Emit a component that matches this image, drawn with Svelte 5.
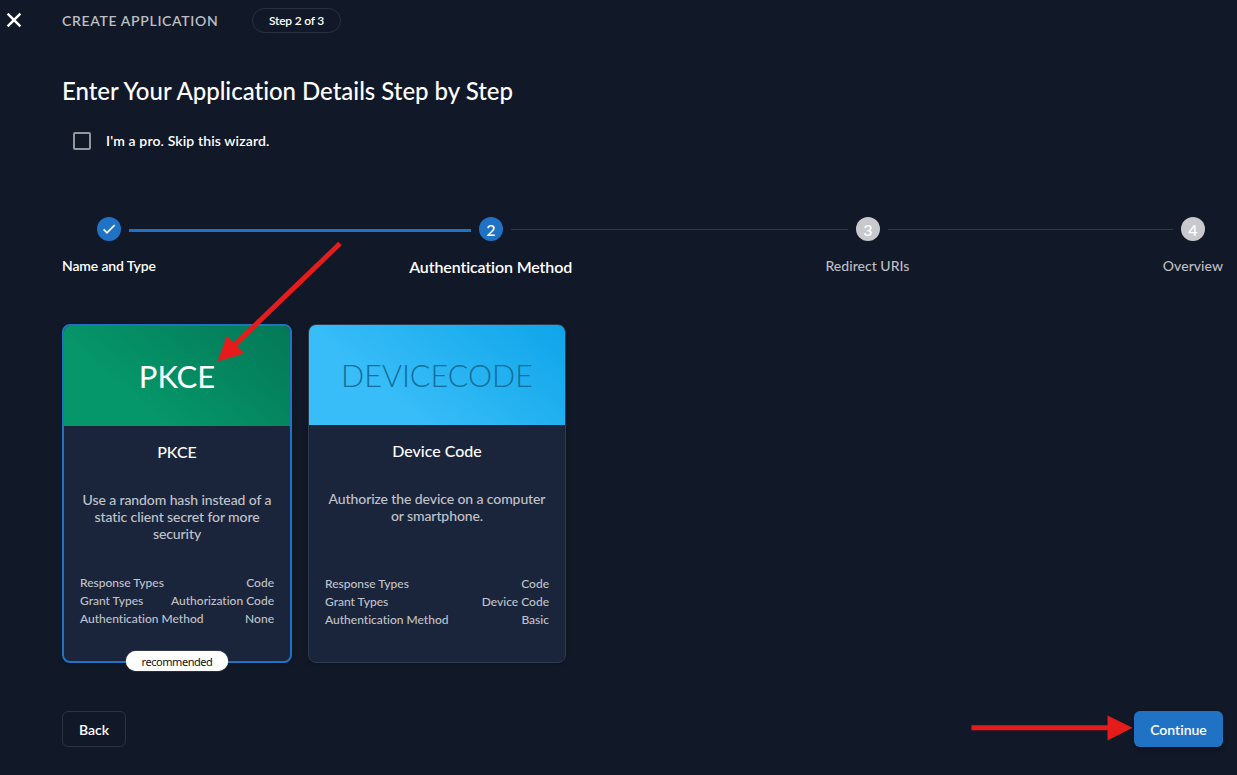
<script>
  const steps = [
    { label: 'Name and Type', state: 'done', line: 342 },
    { label: 'Authentication Method', state: 'current', line: 337 },
    { label: 'Redirect URIs', state: 'todo', line: 285 },
    { label: 'Overview', state: 'todo', line: 0 },
  ];

  const methods = [
    {
      key: 'PKCE',
      title: 'PKCE',
      theme: 'green',
      recommended: true,
      description: ['Use a random hash instead of a', 'static client secret for more', 'security'],
      rows: [
        ['Response Types', 'Code'],
        ['Grant Types', 'Authorization Code'],
        ['Authentication Method', 'None'],
      ],
    },
    {
      key: 'DEVICECODE',
      title: 'Device Code',
      theme: 'blue',
      recommended: false,
      description: ['Authorize the device on a computer', 'or smartphone.'],
      rows: [
        ['Response Types', 'Code'],
        ['Grant Types', 'Device Code'],
        ['Authentication Method', 'Basic'],
      ],
    },
  ];
</script>

<div class="page">
  <header>
    <button class="close" aria-label="Close">
      <svg width="16" height="16" viewBox="0 0 16 16"><path d="M1.6 1.600 14.400 14.400M14.400 1.600 1.600 14.400" /></svg>
    </button>
    <span class="crumb">CREATE APPLICATION</span>
    <span class="pill">Step 2 of 3</span>
  </header>

  <main>
    <h1>Enter Your Application Details Step by Step</h1>

    <div class="skip">
      <span class="box" role="checkbox" aria-checked="false" aria-label="Skip wizard" tabindex="0"></span>
      <span class="skip-text">I'm a pro. Skip this wizard.</span>
    </div>

    <div class="track">
      {#each steps as step, i}
        <span class="dot {step.state}">
          {#if step.state === 'done'}
            <svg width="16" height="16" viewBox="0 0 24 24"><path d="M9 16.17 4.83 12l-1.42 1.41L9 19 21 7l-1.41-1.41z" /></svg>
          {:else}
            {i + 1}
          {/if}
        </span>
        {#if step.line}
          <span class="line {step.state}" style="flex-grow: {step.line}"></span>
        {/if}
      {/each}
    </div>
    <div class="labels">
      {#each steps as step}
        <span class={step.state}>{step.label}</span>
      {/each}
    </div>

    <div class="cards">
      {#each methods as method}
        <section class="card {method.theme}" class:selected={method.recommended}>
          <div class="banner"><span>{method.key}</span></div>
          <h2>{method.title}</h2>
          <p>
            {#each method.description as text}<span>{text}</span>{/each}
          </p>
          <dl>
            {#each method.rows as [name, value]}
              <div><dt>{name}</dt><dd>{value}</dd></div>
            {/each}
          </dl>
          {#if method.recommended}
            <span class="badge">recommended</span>
          {/if}
        </section>
      {/each}
    </div>

    <footer>
      <button class="back">Back</button>
      <button class="continue">Continue</button>
    </footer>
  </main>

  <svg class="arrows" width="1237" height="775" viewBox="0 0 1237 775">
    <path class="shaft" d="M340 243.500 232 347.500" />
    <path class="head" d="M217.500 361.500 227 335.500 244 353.500z" />
    <path class="shaft" d="M971.500 727.800H1110" />
    <path class="head" d="M1132.500 727.800 1107.500 715.500V740.500z" />
  </svg>
</div>

<style>
  :global(body) { margin: 0; background: #111827; }
  .page {
    position: relative;
    box-sizing: border-box;
    width: 1237px;
    height: 775px;
    overflow: hidden;
    background: #111827;
    color: #fff;
    font-family: Lato, sans-serif;
    font-size: 14px;
    font-variant-ligatures: none;
    white-space: nowrap;
  }
  button { font: inherit; font-variant-ligatures: none; color: inherit; padding: 0; cursor: pointer; }
  header { display: flex; align-items: center; height: 41px; padding-left: 6px; }
  .close { display: flex; width: 16px; margin: -2px 40px 0 0; border: 0; background: none; }
  .close path { stroke: #fff; stroke-width: 2.5; fill: none; }
  .crumb { width: 190px; color: #bcbec2; font-size: 14px; font-weight: 600; letter-spacing: 0.65px; }
  .pill {
    box-sizing: border-box;
    width: 89px;
    height: 25px;
    border: 1px solid #293241;
    border-radius: 13px;
    font-size: 12px;
    font-weight: 600;
    line-height: 24px;
    text-align: center;
    letter-spacing: -0.2px;
  }
  main { padding: 0 14px 0 62px; }
  h1 { margin: 35px 0 0; font-size: 24px; font-weight: 500; line-height: 30px; letter-spacing: -0.02px; }
  .skip { display: flex; align-items: center; height: 24px; margin-top: 23px; padding-left: 11px; gap: 15px; font-weight: 600; }
  .skip-text { margin-top: -1px; letter-spacing: 0.13px; }
  .box { box-sizing: border-box; width: 18px; height: 18px; border: 2px solid #94979d; border-radius: 2px; }
  .track { display: flex; align-items: center; gap: 8px; height: 24px; margin-top: 64px; padding: 0 18px 0 35px; }
  .dot {
    display: flex;
    flex: none;
    align-items: center;
    justify-content: center;
    width: 24px;
    height: 24px;
    border-radius: 50%;
    background: #2073c4;
    font-size: 16px;
    font-weight: 500;
    line-height: 24px;
    padding-top: 2px;
    box-sizing: border-box;
  }
  .dot.done { padding-top: 0; }
  .dot.todo { background: #c7c9cc; }
  .dot svg { fill: #fff; stroke: #fff; stroke-width: 0.6; }
  .line { flex-basis: 0; height: 1px; background: #30384a; }
  .line.done { height: 3px; margin-top: 2px; background: #2073c4; }
  .labels { display: flex; justify-content: space-between; height: 20px; margin-top: 15px; font-weight: 600; line-height: 20px; }
  .labels .done { letter-spacing: -0.15px; }
  .labels .current { font-size: 16px; line-height: 22px; letter-spacing: -0.12px; }
  .labels .todo { color: #bcbec2; font-weight: 500; letter-spacing: 0.03px; }
  .cards { display: flex; gap: 16px; height: 339px; margin-top: 48px; }
  .card {
    position: relative;
    box-sizing: border-box;
    display: flex;
    flex-direction: column;
    width: 258px;
    border: 1px solid #2d3a50;
    border-radius: 8px;
    background: #1a253c;
    box-shadow: 0 1px 4px rgba(0, 0, 0, 0.25);
    text-align: center;
  }
  .card.selected { width: 230px; border: 2px solid #2073c4; }
  .banner {
    display: flex;
    align-items: center;
    justify-content: center;
    height: 100px;
    border-radius: 7px 7px 0 0;
    font-size: 31px;
  }
  .selected .banner { border-radius: 6px 6px 0 0; }
  .green .banner { background: linear-gradient(40deg, #059669 30%, #047857); }
  .blue .banner { background: linear-gradient(40deg, #38bdf8 30%, #0ea5e9); color: #126f9b; font-size: 30.500px; font-weight: 300; }
  h2 { margin: 15px 0 0; font-size: 16px; font-weight: 500; line-height: 22px; }
  p { display: flex; flex-direction: column; height: 51px; margin: 28px 0 0; color: #c0c3c9; line-height: 17px; font-weight: 500; letter-spacing: -0.1px; }
  dl { margin: 32px 16px 0; color: #c0c3c9; font-size: 12px; line-height: 18px; font-weight: 500; letter-spacing: 0; }
  .blue dl { margin-top: 34px; }
  dl div { display: flex; justify-content: space-between; }
  dd { margin: 0; }
  .badge {
    position: absolute;
    left: 62px;
    bottom: -10px;
    width: 102px;
    height: 20px;
    border-radius: 10px;
    background: #fff;
    box-shadow: 0 0 1px #fff;
    color: #111;
    font-size: 11px;
    line-height: 22px;
    font-family: "Noto Sans", sans-serif;
    letter-spacing: -0.45px;
  }
  footer { display: flex; justify-content: space-between; margin-top: 48px; font-weight: 600; }
  footer button { box-sizing: border-box; height: 36px; border-radius: 6px; line-height: 36px; }
  .back { width: 64px; border: 1px solid #2b3342; background: none; }
  .continue { width: 89px; border: 0; padding-top: 1px; background: #2073c4; box-shadow: 0 2px 4px rgba(0, 0, 0, 0.3); }
  .arrows { position: absolute; inset: 0; pointer-events: none; }
  .shaft { stroke: #e61b1b; stroke-width: 5; fill: none; }
  .head { fill: #e61b1b; }
</style>
